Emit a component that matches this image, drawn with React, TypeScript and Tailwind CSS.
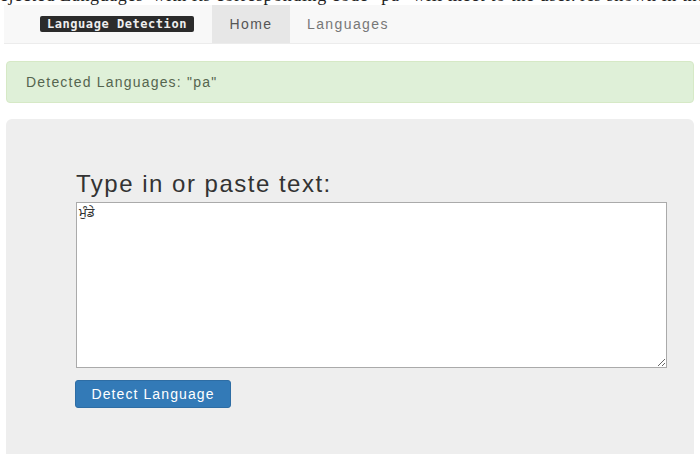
import React from "react";

const App = () => {
  return (
    <div className="w-[700px] h-[454px] overflow-hidden bg-white font-['Liberation_Sans',Arial,sans-serif]">
      {/* clipped line of the page above */}
      <div className="h-[5px] overflow-hidden">
        <div className="-mt-[14px] whitespace-nowrap font-['Liberation_Serif',serif] text-[18px] leading-[18px] tracking-[0.6px] text-[#222]">
          ejected Languages' with its corresponding code "pa" will meet to the user. As shown in the
        </div>
      </div>

      <nav className="ml-[4px] flex h-[39px] items-stretch border-b border-[#ececec] bg-[#f8f8f8]">
        <div className="flex w-[208px] items-center pl-[36px]">
          <span className="rounded-[2px] bg-[#2b2b2b] px-[7px] font-['DejaVu_Sans_Mono',monospace] text-[12px] font-semibold leading-[16px] tracking-[0.55px] text-[#eeeeee]">
            Language Detection
          </span>
        </div>
        <div className="flex w-[78px] items-center justify-center bg-[#e7e7e7] text-[14px] tracking-[1.4px] text-[#555]">
          Home
        </div>
        <div className="flex items-center pl-[17px] text-[14px] tracking-[1.4px] text-[#777]">
          Languages
        </div>
      </nav>

      <div className="mx-[6px] mt-[17px] flex h-[42px] items-center rounded-[4px] border border-[#d6e9c6] bg-[#dff0d8] pl-[19px] text-[14px] tracking-[1.2px] text-[#55654f]">
        Detected Languages: "pa"
      </div>

      <div className="mx-[6px] mt-[16px] h-[360px] rounded-[6px] bg-[#eeeeee] pl-[70px] pt-[51px]">
        <div className="text-[24px] leading-[28px] tracking-[1.5px] text-[#333]">Type in or paste text:</div>
        <textarea
          className="mt-[4px] block h-[166px] w-[591px] resize border border-[#aaa] bg-white px-[2px] py-[1px] text-[13px] text-[#333] outline-none font-['Noto_Sans_Gurmukhi','Noto_Sans','DejaVu_Sans',sans-serif]"
          defaultValue="ਮੁੰਡੇ"
        />
        <button className="mt-[12px] h-[28px] w-[156px] -ml-[1px] rounded-[3px] border border-[#2e6da4] bg-[#337ab7] text-[14px] tracking-[1.1px] text-white">
          Detect Language
        </button>
      </div>
    </div>
  );
};

export default App;
